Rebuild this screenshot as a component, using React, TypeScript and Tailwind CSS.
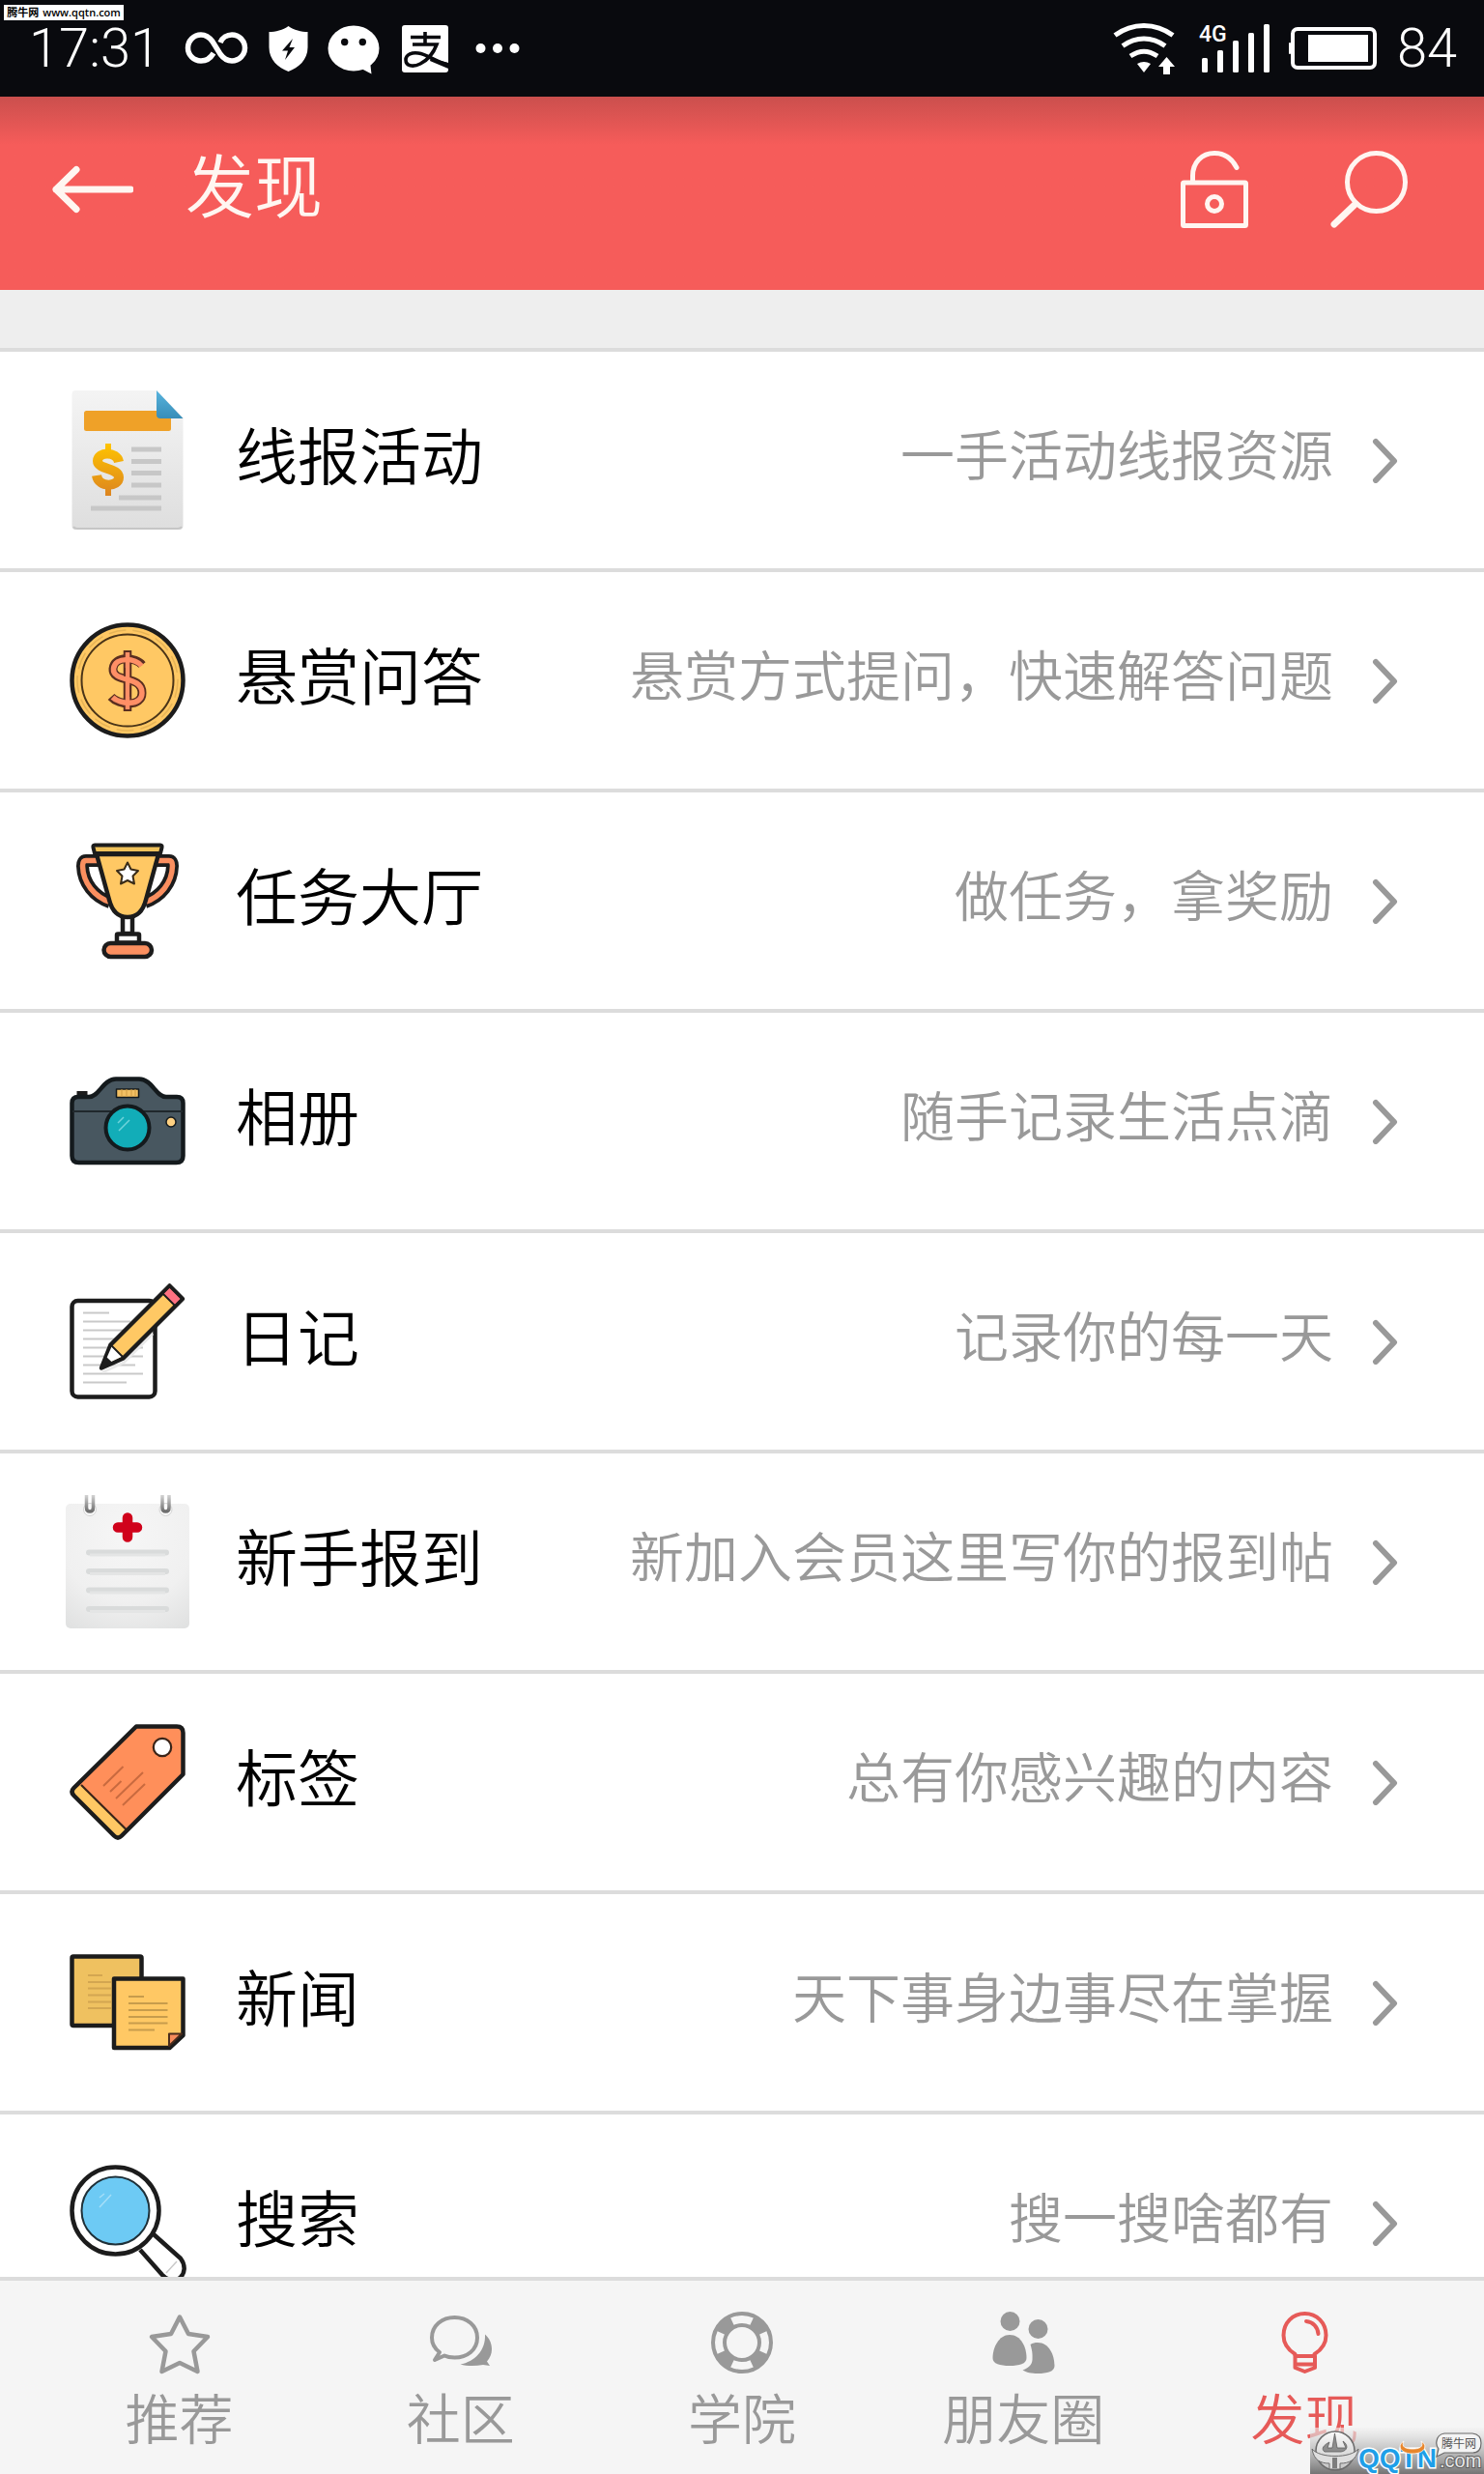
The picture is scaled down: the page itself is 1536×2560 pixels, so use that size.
import type { ReactNode } from "react";

const INK = "#1c1c1c";

/* ---------- status bar glyphs ---------- */

function StatusBar() {
  return (
    <div className="flex h-[100px] shrink-0 items-center justify-between bg-[#090a0e] pl-[30px] pr-7 font-['Roboto'] text-[56px] font-light leading-none text-white">
      <div className="flex items-center gap-5">
        <span className="mr-1">17:31</span>
        <svg width="68" height="56" viewBox="0 0 68 56" fill="none" stroke="#fff" strokeWidth="5.500">
          <path d="M31 33C28 38 23 41 18 41A13.5 13.5 0 0 1 18 14C23 14 27 17 30 21L38 34C41 38 45 41 50 41A13.5 13.5 0 0 0 50 14C45 14 40 17 38 22" />
        </svg>
        <svg width="41" height="56" viewBox="0 0 41 56">
          <path d="M20.500 5C26 9 34 11 40.500 11V27C40.500 40 31 48 20.500 52C10 48 .5 40 .5 27V11C7 11 15 9 20.500 5Z" fill="#fff" />
          <path d="M25 18L14 30.500H20L17 40L27 27H21.500Z" fill="#090a0e" />
        </svg>
        <svg width="56" height="56" viewBox="0 0 56 56">
          <ellipse cx="27" cy="28" rx="26.500" ry="23.500" fill="#fff" />
          <path d="M35 49L45.500 54.500L44 42Z" fill="#fff" />
          <circle cx="17.700" cy="21.500" r="3.700" fill="#090a0e" />
          <circle cx="36.300" cy="21.500" r="3.700" fill="#090a0e" />
        </svg>
        <svg width="50" height="56" viewBox="0 0 50 56">
          <rect x="1" y="4" width="48" height="49" rx="3" fill="#fff" />
          <g fill="none" stroke="#090a0e" strokeWidth="3.600">
            <path d="M10 16.500H41M25 11V23M12 24H37C34 32 28 40 20 44C12 48 5 46 5 40C5 34 12 32 18 33C28 34.500 34 41 49 45" />
          </g>
          <path d="M31 38L49 43V49L30 41Z" fill="#090a0e" />
        </svg>
        <svg width="60" height="56" viewBox="0 0 60 56" fill="#fff">
          <circle cx="12.500" cy="28" r="5" />
          <circle cx="30" cy="28" r="5" />
          <circle cx="47.500" cy="28" r="5" />
        </svg>
      </div>
      <div className="flex items-center gap-5">
        <svg width="68" height="56" viewBox="0 0 68 56" fill="none" stroke="#fff" strokeWidth="5">
          <path d="M2 14.500C20 1 44 1 62 14.500" />
          <path d="M10 25.500C24 15.500 40 15.500 54 25.500" />
          <path d="M18 36C28 29.500 36 29.500 46 36" />
          <path d="M25 44Q32 40 39 44L32 53Z" fill="#fff" stroke="none" />
          <path d="M55.500 37L64 47H59V55H52V47H47Z" fill="#fff" stroke="none" />
        </svg>
        <svg width="74" height="56" viewBox="0 0 74 56" fill="#fff">
          <text x="1" y="21" fontFamily="Roboto" fontSize="23" fontWeight="500">4G</text>
          <rect x="4" y="38" width="6" height="15" rx="1.500" />
          <rect x="20" y="30" width="6" height="23" rx="1.500" />
          <rect x="36" y="20" width="6" height="33" rx="1.500" />
          <rect x="52" y="12" width="6" height="41" rx="1.500" />
          <rect x="68" y="3" width="6" height="50" rx="1.500" />
        </svg>
        <svg width="92" height="56" viewBox="0 0 92 56">
          <rect x="4" y="8" width="85" height="40" rx="5" fill="none" stroke="#fff" strokeWidth="4" />
          <rect x="20" y="14" width="62" height="28" fill="#fff" />
          <path d="M2.500 23H0Q-1 28 0 33H2.500Z" fill="#fff" stroke="#fff" strokeWidth="1.500" />
        </svg>
        <span>84</span>
      </div>
    </div>
  );
}

/* ---------- header ---------- */

function Header() {
  return (
    <header className="flex h-[200px] shrink-0 items-center bg-linear-to-b from-[#cb4f4d] via-[#f65c5a] via-25% to-[#f65c5a] pb-2 pl-[54px] pr-[78px] text-[#fff6f1]">
      <button type="button" aria-label="返回">
        <svg width="84" height="80" viewBox="0 0 84 80" fill="none" stroke="currentColor" strokeWidth="7" strokeLinecap="round" strokeLinejoin="round">
          <path d="M81 40H4M25 19.500L4 40L25 60.500" />
        </svg>
      </button>
      <h1 className="ml-[54px] flex-1 pb-4 text-[71px] font-[350] leading-[80px]">发现</h1>
      <button type="button" aria-label="解锁">
        <svg width="70" height="80" viewBox="0 0 70 80" fill="none" stroke="currentColor" strokeWidth="5" strokeLinecap="round" strokeLinejoin="round">
          <rect x="2.500" y="33" width="65" height="44.500" rx="1" />
          <path d="M12.500 32V26C12.500 12 22 2.500 35 2.500C46 2.500 53 8 58 17.500" />
          <circle cx="35" cy="55" r="7.500" />
        </svg>
      </button>
      <button type="button" aria-label="搜索" className="ml-[84px]">
        <svg width="82" height="80" viewBox="0 0 82 80" fill="none" stroke="currentColor" strokeWidth="5" strokeLinecap="round">
          <circle cx="48.500" cy="32.500" r="30" />
          <path d="M27 55L5 76" strokeWidth="7" />
        </svg>
      </button>
    </header>
  );
}

/* ---------- list icons, all on a 144 grid ---------- */

function Icon({ children }: { children: ReactNode }) {
  return (
    <svg className="size-36 shrink-0" viewBox="0 0 144 144" fill="none" strokeLinejoin="round" aria-hidden="true">
      {children}
    </svg>
  );
}

const ReportIcon = () => (
  <Icon>
    <defs>
      <linearGradient id="paper" x1="0" y1="0" x2="0" y2="1">
        <stop offset="0" stopColor="#f4f4f4" />
        <stop offset="1" stopColor="#dedede" />
      </linearGradient>
      <linearGradient id="gold" gradientUnits="userSpaceOnUse" x1="0" y1="55" x2="0" y2="109">
        <stop offset="0" stopColor="#ffc400" />
        <stop offset="1" stopColor="#dc8420" />
      </linearGradient>
      <linearGradient id="fold" x1="0" y1="0" x2="0" y2="1">
        <stop offset="0" stopColor="#58b4de" />
        <stop offset="1" stopColor="#378db8" />
      </linearGradient>
    </defs>
    <path d="M18 0H102L129.500 28V140Q129.500 144 125.500 144H18Q14.500 144 14.500 140V4Q14.500 0 18 0Z" fill="url(#paper)" />
    <path d="M16 141Q17 143 20 143H124Q127 143 128 141" stroke="#c6c6c6" strokeWidth="2" />
    <rect x="27" y="21" width="90" height="21" rx="2.500" fill="#efa128" />
    <path d="M102 0L129.500 29H106Q102 29 102 25Z" fill="url(#fold)" />
    <path d="M63 74C61 63 41 63 41 73C41 82 63 80 63 90C63 100 42 101 40 88" stroke="url(#gold)" strokeWidth="10" />
    <path d="M49 55h6v12h-6zM49 96h6v13h-6z" fill="url(#gold)" />
    <path d="M76 61H107M76 73.500H107M76 85.500H107M76 98H107M63 111H107M34 122H107" stroke="#c7c7c7" strokeWidth="5" />
  </Icon>
);

const CoinIcon = () => (
  <Icon>
    <circle cx="72" cy="72" r="57.500" fill="#ffc864" stroke={INK} strokeWidth="4.500" />
    <circle cx="72" cy="72" r="52" stroke="#e6b457" strokeWidth="1.500" strokeDasharray="18 7" />
    <circle cx="72" cy="72" r="47.500" stroke="#4a3418" strokeWidth="2" />
    <path d="M87 56C81 48 58 46 57 60C56 75 87 66 87 85C87 100 63 98 55 89" stroke="#5a2e20" strokeWidth="9" />
    <path d="M72 41V104" stroke="#5a2e20" strokeWidth="8.500" />
    <path d="M86.500 57C81 49 59 47 57.500 60C56 74 87 67 87 85C87 99 64 97 56.500 89.500" stroke="#ff8f66" strokeWidth="5.500" />
    <path d="M72 43V102" stroke="#ff8f66" strokeWidth="4.500" />
    <path d="M69 59V68M75 77V89" stroke="#5a2e20" strokeWidth="1.500" />
  </Icon>
);

const TrophyIcon = () => (
  <Icon>
    <path d="M42 30.500H29Q25.500 30.500 25.500 36C26 54 38 68 54 73.500M102 30.500H115Q118.500 30.500 118.500 36C118 54 106 68 90 73.500" stroke={INK} strokeWidth="13" />
    <path d="M42 30.500H29Q25.500 30.500 25.500 36C26 54 38 68 54 73.500M102 30.500H115Q118.500 30.500 118.500 36C118 54 106 68 90 73.500" stroke="#fb8f5f" strokeWidth="5.500" />
    <path d="M67 88V106H77V88" fill="#fff" stroke={INK} strokeWidth="4.500" />
    <rect x="61" y="106.500" width="23" height="9" rx="1" fill="#fff" stroke={INK} strokeWidth="4.500" />
    <rect x="47.500" y="116" width="49.500" height="14" rx="7" fill="#fb8f5f" stroke={INK} strokeWidth="4.500" />
    <path d="M40 24L53 71C56 83 63 89 72 89C81 89 88 83 91 71L104 24Z" fill="#ffc864" stroke={INK} strokeWidth="4.500" />
    <path d="M38 14.500H106Q108 14.500 107.500 17L106 23H38L36.500 17Q36 14.500 38 14.500Z" fill="#efc15a" stroke={INK} strokeWidth="4" />
    <path d="M72 32.500L75.500 39.500L83 41L77.500 46.500L79 54.500L72 51L65 54.500L66.500 46.500L61 41L68.500 39.500Z" fill="#fff" stroke="#3a2c18" strokeWidth="2" />
  </Icon>
);

const CameraIcon = () => (
  <Icon>
    <rect x="19.500" y="41" width="11" height="8" fill={INK} />
    <path d="M21 47H32C43 47 46 29 60 28.500H84C98 29 101 47 112 47H123Q129.500 47 129.500 53.500V108Q129.500 115 122.500 115H21.500Q14.500 115 14.500 108V53.500Q14.500 47 21 47Z" fill="#485760" stroke="#141a1d" strokeWidth="4.500" />
    <path d="M15 62H129" stroke="#20282c" strokeWidth="2" />
    <rect x="60.500" y="39" width="23" height="8.500" fill="#f3c063" stroke="#141a1d" strokeWidth="1.500" />
    <path d="M66 39V47M71 39V47M76 39V47M80 39V47" stroke="#d09c45" />
    <circle cx="72" cy="79" r="22.500" fill="#12adb8" stroke="#141a1d" strokeWidth="4" />
    <path d="M62 74L68 68M63 82L74 71" stroke="#6fd3da" strokeWidth="1.500" />
    <circle cx="117" cy="73" r="5" fill="#ffd182" stroke="#141a1d" strokeWidth="1.500" />
  </Icon>
);

const DiaryIcon = () => (
  <Icon>
    <rect x="14.500" y="30" width="86" height="99.500" rx="6" fill="#fff" stroke={INK} strokeWidth="4.500" />
    <path d="M26 42.500H53M26 51.500H75M26 60.500H80M26 69.500H80M26 78.500H88M26 87.500H88M26 96.500H80M26 105.500H88M26 114.500H71" stroke="#c9c9c9" strokeWidth="2.200" />
    <path d="M46 104L68 94L98 64" stroke="#e9e9e9" strokeWidth="3" />
    <path d="M115.500 14.500L129 28L67.500 89.500L45 99.500L54.500 75.500Z" fill="#ffc864" stroke={INK} strokeWidth="4.500" />
    <path d="M56 76.500L66.500 87.500L47 97Z" fill="#fff" />
    <path d="M44.500 100.500L50 88L57 94.500Z" fill={INK} />
    <path d="M115.500 17L126.500 28L120.500 34L109.500 23Z" fill="#ff7182" />
    <path d="M108.500 22.500L121 35M55 76L67.500 88.500" stroke={INK} strokeWidth="1.800" />
  </Icon>
);

const CheckInIcon = () => (
  <Icon>
    <defs>
      <radialGradient id="pad" cx="0.5" cy="0.25" r="0.9">
        <stop offset="0" stopColor="#f6f6f6" />
        <stop offset="0.6" stopColor="#f0f0f0" />
        <stop offset="1" stopColor="#dfe0e0" />
      </radialGradient>
      <linearGradient id="ring" x1="0" y1="0" x2="0" y2="1">
        <stop offset="0" stopColor="#d4d4d4" />
        <stop offset="1" stopColor="#6e6e6e" />
      </linearGradient>
    </defs>
    <rect x="8" y="12" width="128" height="129" rx="5" fill="url(#pad)" />
    <circle cx="33" cy="18" r="6.500" fill="#fafafa" stroke="#d4d4d4" />
    <circle cx="111.500" cy="18" r="6.500" fill="#fafafa" stroke="#d4d4d4" />
    <path d="M29.500 3V16Q29.500 20 33 20Q36.500 20 36.500 16V3M108 3V16Q108 20 111.500 20Q115 20 115 16V3" stroke="url(#ring)" strokeWidth="3.500" />
    <path d="M72 26.500V46.500M62 36.500H82" stroke="#d0021b" strokeWidth="10.500" strokeLinecap="round" />
    <path d="M32 62.500H112M32 82H112M32 101.500H112M32 121H112" stroke="#d9dbdb" strokeWidth="6" strokeLinecap="round" />
    <path d="M33 65H111M33 84.500H111M33 104H111M33 123.500H111" stroke="#e4e5e5" strokeWidth="3" />
  </Icon>
);

const TagIcon = () => (
  <Icon>
    <path d="M81 14.500H123Q129.500 14.500 129.500 21V64L66 128Q62 131 58 128L16 86Q13 82 16 78Z" fill="#ff8f5a" />
    <path d="M24 75L70.500 121L64.500 127Q61.500 130 58.500 127L17 86Q14 82 17 79Z" fill="#ffc864" />
    <path d="M24 75L70.500 121" stroke="#3a2418" strokeWidth="2.200" />
    <path d="M81 14.500H123Q129.500 14.500 129.500 21V64L66 127.500Q62 131.500 58 127.500L16.500 86Q12.500 82 16.500 78Z" stroke={INK} strokeWidth="4.500" />
    <circle cx="108" cy="36" r="9.200" fill="#fff" stroke="#3a2418" strokeWidth="2.200" />
    <path d="M67.500 56L47 76M65.500 71L54 82M88 62L60 89M90 74L67 96" stroke="#c96a3f" strokeWidth="2" />
  </Icon>
);

const NotesIcon = () => (
  <Icon>
    <rect x="14.500" y="24.500" width="72" height="71.500" rx="1.500" fill="#efc160" stroke={INK} strokeWidth="4.500" />
    <path d="M31 44H46M31 51H55M31 57.500H55M31 64.500H55M31 71.500H55M31 78H55" stroke="#d3a651" strokeWidth="2" />
    <path d="M58 47.500H129.500V107L116 119H58Z" fill="#ffc864" />
    <path d="M58 47.500H129.500V106L115.500 119H58Z" stroke={INK} strokeWidth="4.500" />
    <path d="M73 66H89M73 73H113.500M73 80H113.500M73 87H113.500M73 93.500H113.500M73 100.500H100" stroke="#c79c4c" strokeWidth="2.200" />
    <path d="M115 117V104.500H128Z" fill="#f98d5c" stroke="#4a2c1c" strokeWidth="2" />
  </Icon>
);

const MagnifierIcon = () => (
  <Icon>
    <path d="M85 100L108 126C122 140 138 124 127 109L99 84" fill="#fff" stroke={INK} strokeWidth="4.500" />
    <path d="M112 124L123 112" stroke="#c9c9c9" strokeWidth="1.500" />
    <circle cx="59.500" cy="59.500" r="45" fill="#fff" stroke={INK} strokeWidth="4.500" />
    <circle cx="59.500" cy="59.500" r="35" fill="#6dcaf4" stroke="#1f3038" strokeWidth="2" />
    <path d="M43 46L48 42M43 56L55 43" stroke="#a5def8" strokeWidth="1.500" />
  </Icon>
);

const rows: { title: string; hint: string; icon: () => ReactNode }[] = [
  { title: "线报活动", hint: "一手活动线报资源", icon: ReportIcon },
  { title: "悬赏问答", hint: "悬赏方式提问，快速解答问题", icon: CoinIcon },
  { title: "任务大厅", hint: "做任务，拿奖励", icon: TrophyIcon },
  { title: "相册", hint: "随手记录生活点滴", icon: CameraIcon },
  { title: "日记", hint: "记录你的每一天", icon: DiaryIcon },
  { title: "新手报到", hint: "新加入会员这里写你的报到帖", icon: CheckInIcon },
  { title: "标签", hint: "总有你感兴趣的内容", icon: TagIcon },
  { title: "新闻", hint: "天下事身边事尽在掌握", icon: NotesIcon },
  { title: "搜索", hint: "搜一搜啥都有", icon: MagnifierIcon },
];

function Row({ title, hint, icon: RowIcon }: (typeof rows)[number]) {
  return (
    <li className="border-b-4 border-[#dcdcdc]">
      <a href="#" className="flex h-56 items-center pl-[60px] pr-[86px]">
        <RowIcon />
        <span className="ml-10 flex-1 pb-4 text-[64px] font-[350] leading-[80px] text-black">{title}</span>
        <span className="pb-4 text-[56px] font-[350] leading-[80px] text-[#999]">{hint}</span>
        <svg className="ml-10" width="30" height="48" viewBox="0 0 30 48" fill="none" stroke="#999" strokeWidth="6" strokeLinecap="round" strokeLinejoin="round">
          <path d="M4 5L23 25L4 45" />
        </svg>
      </a>
    </li>
  );
}

/* ---------- bottom tabs ---------- */

const StarTab = () => (
  <path d="M32 5.500L41 23L61 26L46.500 41L50.500 62L32 53L13.500 62L17.500 41L3 26L23 23Z" fill="none" stroke="currentColor" strokeWidth="4.500" strokeLinejoin="round" />
);

const ChatTab = () => (
  <>
    <path d="M10 42C4.500 38 2 32.500 2 27C2 14.500 12.500 6 25.500 6C38.500 6 49 14.500 49 27C49 39.500 38.500 47.500 25.500 47.500C21.500 47.500 18 47 15 45.500L5 50Z" fill="none" stroke="currentColor" strokeWidth="4" strokeLinejoin="round" />
    <path d="M57 23.500C62 28 64 33 64 39C64 44 62 48 59 51.500L62 56L55 55C47 56.500 38 56.500 31.500 54.500C46 52 58 40 57 23.500Z" fill="currentColor" />
  </>
);

const BuoyTab = () => (
  <>
    <circle cx="32" cy="32" r="24" fill="none" stroke="currentColor" strokeWidth="16" />
    <circle cx="32" cy="32" r="24" fill="none" stroke="#f5f5f5" strokeWidth="8" pathLength="360" strokeDasharray="50 40" strokeDashoffset="25" />
  </>
);

const FriendsTab = () => (
  <g fill="currentColor">
    <circle cx="18.500" cy="10" r="10" />
    <path d="M18 24C30 24 35.500 37 35.500 48C35.500 54 28 56 18 56C8 56 .5 54 .5 48C.5 37 7 24 18 24Z" />
    <circle cx="47.500" cy="18" r="10" />
    <path d="M39.500 34C42 32.500 44 32 47 32C59 32 64.500 45 64.500 56C64.500 62 57 64 47 64C41 64 35 63 31.500 60.500C37 58.500 41 55.500 41.500 50C42 43 41 39 39.500 34Z" />
  </g>
);

const BulbTab = () => (
  <g fill="none" stroke="currentColor" strokeWidth="4" strokeLinejoin="round">
    <path d="M22.500 46V44C16 40 10.500 34 10.500 24.500C10.500 11.500 20 2 32.500 2C45 2 54.500 11.500 54.500 24.500C54.500 34 49 40 42.500 44V46" />
    <path d="M22.500 46H43V58L32.500 62L22.500 58ZM22.500 54.500H43" />
    <path d="M34 10C41 10.500 46 16 46.500 23" strokeLinecap="round" />
  </g>
);

const tabs: { label: string; icon: () => ReactNode; active?: boolean }[] = [
  { label: "推荐", icon: StarTab },
  { label: "社区", icon: ChatTab },
  { label: "学院", icon: BuoyTab },
  { label: "朋友圈", icon: FriendsTab },
  { label: "发现", icon: BulbTab, active: true },
];

function TabBar() {
  return (
    <nav className="flex h-[204px] shrink-0 border-t-4 border-[#dcdcdc] bg-[#f5f5f5] px-10">
      {tabs.map(({ label, icon: TabIcon, active }) => (
        <a
          key={label}
          href="#"
          aria-current={active ? "page" : undefined}
          className={`flex flex-1 flex-col items-center pt-8 ${active ? "text-[#e65a58]" : "text-[#999]"}`}
        >
          <svg className="size-16 overflow-visible" viewBox="0 0 64 64" aria-hidden="true">
            <TabIcon />
          </svg>
          <span className="mt-1 text-[56px] font-[350] leading-[80px]">{label}</span>
        </a>
      ))}
    </nav>
  );
}

/* ---------- site stamps laid over the page ---------- */

function CornerStamp() {
  return (
    <div className="absolute left-1 top-[5px] flex h-4 w-[124px] items-center justify-center gap-1 whitespace-nowrap bg-white font-['Open_Sans','Noto_Sans_CJK_SC',sans-serif] text-[11px] font-semibold leading-4 text-black">
      <span>腾牛网</span>
      <span>www.qqtn.com</span>
    </div>
  );
}

function LogoStamp() {
  return (
    <svg className="absolute bottom-0 right-0" width="180" height="48" viewBox="0 0 180 48" aria-label="腾牛网 QQTN.com">
      <defs>
        <linearGradient id="stamp" x1="0" y1="0" x2="0" y2="1">
          <stop offset="0" stopColor="#f2f2f2" stopOpacity="0.6" />
          <stop offset="1" stopColor="#747474" />
        </linearGradient>
        <linearGradient id="globe" x1="0" y1="0" x2="0" y2="1">
          <stop offset="0" stopColor="#fafafa" />
          <stop offset="1" stopColor="#c4c4c4" />
        </linearGradient>
      </defs>
      <rect width="180" height="48" fill="url(#stamp)" />
      <circle cx="26" cy="24" r="20" fill="url(#globe)" stroke="#6b6b6b" strokeWidth="1.500" />
      <path d="M2 22C10 32 42 32 50 22C48 34 40 37 31 37V43H20V37C11 37 4 34 2 22Z" fill="#dedede" stroke="#6b6b6b" />
      <path d="M23 31H28V42H23Z" fill="#7d7d7d" />
      <path d="M25.500 6L28 21H37L34 14C40 18 39 24 32 25H15C11 22 14 18 20 15L18 21H23Z" fill="#8d8d8d" stroke="#5f5f5f" strokeWidth="0.800" />
      <text x="50" y="41" fontFamily="Liberation Sans" fontWeight="700" fontSize="28" fill="#1e9fe8" stroke="#fff" strokeWidth="3" paintOrder="stroke">QQTN</text>
      <path d="M97 14C94 20 99 22 106 22C113 22 118 20 115 14C123 19 118 27 106 27C94 27 89 19 97 14Z" fill="#e8862c" stroke="#fff" strokeWidth="0.800" />
      <text x="134" y="41" fontFamily="Liberation Sans" fontSize="20" fill="#e8e8e8" stroke="#5d5d5d" strokeWidth="2" paintOrder="stroke">.com</text>
      <path d="M139 6H168Q177 7 177 16Q177 26 168 26H139L131 30L133 22Q130 18 131 14Q132 7 139 6Z" fill="#f4f4f4" stroke="#6b6b6b" strokeWidth="1.200" />
      <text x="136" y="21" fontFamily="Noto Sans CJK SC" fontSize="12" fill="#555">腾牛网</text>
    </svg>
  );
}

export default function App() {
  return (
    <div className="relative flex h-screen flex-col overflow-hidden bg-[#eee] font-['Noto_Sans_CJK_SC',sans-serif]">
      <StatusBar />
      <Header />
      <main className="min-h-0 flex-1 overflow-hidden pt-[60px]">
        <ul className="border-t-4 border-[#dcdcdc] bg-white">
          {rows.map((row) => (
            <Row key={row.title} {...row} />
          ))}
        </ul>
      </main>
      <TabBar />
      <CornerStamp />
      <LogoStamp />
    </div>
  );
}
